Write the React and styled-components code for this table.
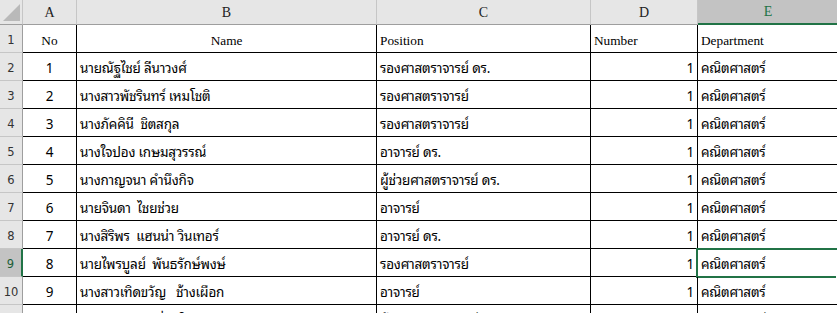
import React from 'react';
import styled, { createGlobalStyle, css } from 'styled-components';

const COLS = '23px 54px 300px 214px 107px 141px';
const GREEN = '#217346';
const THAI = '"Tahoma", "Noto Sans Thai Looped", "Loma", "Garuda", "Norasi", "Noto Serif Thai", "Noto Sans Thai", "DejaVu Sans", sans-serif';

const Global = createGlobalStyle`
  html, body { margin: 0; padding: 0; background: #fff; overflow: hidden; }
  body { width: 837px; height: 313px; }
`;

const Sheet = styled.div`
  width: 837px;
  height: 313px;
  overflow: hidden;
  background: #fff;
  display: flex;
  flex-direction: column;
`;

const Row = styled.div`
  display: grid;
  grid-template-columns: ${COLS};
  height: ${(p) => (p.$head ? 25 : 28)}px;
  flex: none;
  width: 839px;
`;

const Corner = styled.div`
  background: #e6e6e6;
  border-right: 1px solid #c6c6c6;
  border-bottom: 1px solid #9e9e9e;
  display: flex;
  align-items: flex-end;
  justify-content: flex-end;
  padding: 0 2px 3px 0;
`;

const ColHead = styled.div`
  background: ${(p) => (p.$sel ? '#c3c3c3' : '#e6e6e6')};
  border-right: 1px solid #c6c6c6;
  border-bottom: ${(p) => (p.$sel ? `2px solid ${GREEN}` : '1px solid #9e9e9e')};
  color: ${(p) => (p.$sel ? GREEN : '#222')};
  font-family: "Liberation Serif", serif;
  font-size: 14px;
  display: flex;
  align-items: center;
  justify-content: center;
  padding-top: 1px;
`;

const RowHead = styled.div`
  background: ${(p) => (p.$sel ? '#c3c3c3' : '#e6e6e6')};
  border-right: ${(p) => (p.$sel ? `2px solid ${GREEN}` : '1px solid #9e9e9e')};
  border-bottom: 1px solid #c6c6c6;
  color: ${(p) => (p.$sel ? '#1d5e38' : '#333')};
  font-family: "DejaVu Sans", sans-serif;
  font-size: 11.5px;
  display: flex;
  align-items: center;
  justify-content: center;
  padding-top: 2px;
`;

const Cell = styled.div`
  position: relative;
  border-right: 1px solid #000;
  border-bottom: 1px solid #000;
  display: flex;
  align-items: flex-end;
  justify-content: ${(p) => (p.$align === 'center' ? 'center' : p.$align === 'right' ? 'flex-end' : 'flex-start')};
  padding: 0 3px 0 3px;
  white-space: pre;
  overflow: visible;
  color: #000;
  ${(p) =>
    p.$title
      ? css`
          font-family: "Liberation Serif", serif;
          font-size: 13.3px;
          line-height: 16px;
          padding-bottom: 3px;
        `
      : css`
          font-family: ${THAI};
          font-size: 13.5px;
          font-stretch: 87.5%;
          letter-spacing: -0.2px;
          line-height: 20px;
          padding-bottom: 3px;
        `}
`;

const Selection = styled.div`
  position: absolute;
  left: -2px;
  top: -1px;
  right: -2px;
  bottom: -2px;
  border: 2px solid ${GREEN};
  pointer-events: none;
`;

const Handle = styled.div`
  position: absolute;
  right: -5px;
  bottom: -5px;
  width: 5px;
  height: 5px;
  background: ${GREEN};
  border: 1px solid #fff;
`;

const rows = [
  ['1', 'นายณัฐไชย์ ลีนาวงศ์', 'รองศาสตราจารย์ ดร.'],
  ['2', 'นางสาวพัชรินทร์ เหมโชติ', 'รองศาสตราจารย์'],
  ['3', 'นางภัคคินี  ชิตสกุล', 'รองศาสตราจารย์'],
  ['4', 'นางใจปอง เกษมสุวรรณ์', 'อาจารย์ ดร.'],
  ['5', 'นางกาญจนา คำนึงกิจ', 'ผู้ช่วยศาสตราจารย์ ดร.'],
  ['6', 'นายจินดา  ไชยช่วย', 'อาจารย์'],
  ['7', 'นางสิริพร  แฮนน่า วินเทอร์', 'อาจารย์ ดร.'],
  ['8', 'นายไพรบูลย์  พันธรักษ์พงษ์', 'รองศาสตราจารย์'],
  ['9', 'นางสาวเทิดขวัญ   ช้างเผือก', 'อาจารย์'],
  ['10', 'นางสาวศิริพร  ชื่นชูใจ', 'ผู้ช่วยศาสตราจารย์'],
];

export default function App() {
  return (
    <Sheet>
      <Global />
      <Row $head>
        <Corner>
          <svg width="17" height="17" viewBox="0 0 17 17">
            <polygon points="17,0 17,17 0,17" fill="#b9b9b9" />
          </svg>
        </Corner>
        {['A', 'B', 'C', 'D', 'E'].map((c) => (
          <ColHead key={c} $sel={c === 'E'}>{c}</ColHead>
        ))}
      </Row>
      <Row>
        <RowHead>1</RowHead>
        <Cell $title $align="center">No</Cell>
        <Cell $title $align="center">Name</Cell>
        <Cell $title>Position</Cell>
        <Cell $title>Number</Cell>
        <Cell $title>Department</Cell>
      </Row>
      {rows.map(([no, name, pos], i) => {
        const sel = i === 7;
        return (
          <Row key={no}>
            <RowHead $sel={sel}>{i + 2}</RowHead>
            <Cell $align="center">{no}</Cell>
            <Cell>{name}</Cell>
            <Cell>{pos}</Cell>
            <Cell $align="right">1</Cell>
            <Cell>
              {'คณิตศาสตร์'}
              {sel && (
                <Selection>
                  <Handle />
                </Selection>
              )}
            </Cell>
          </Row>
        );
      })}
    </Sheet>
  );
}
